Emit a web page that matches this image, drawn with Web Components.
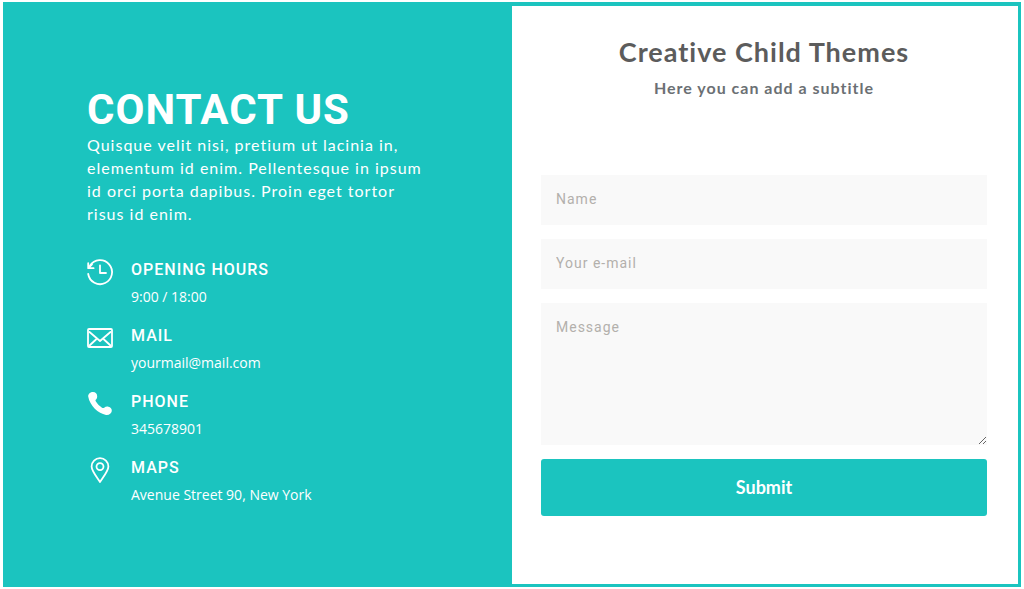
<!DOCTYPE html>
<html lang="en">
<head>
<meta charset="utf-8">
<meta name="viewport" content="width=device-width, initial-scale=1">
<title>Contact Us</title>
<style>
  :root { --teal: #1bc4bf; --heading: Roboto, "Liberation Sans", sans-serif; --body: Lato, "Noto Sans", sans-serif; --detail: "Open Sans", sans-serif; }
  body { margin: 0; background: #fff; font-family: var(--body); }
</style>
</head>
<body>
<contact-page>
  <contact-info slot="info" heading="CONTACT US">
    Quisque velit nisi, pretium ut lacinia in, elementum id enim. Pellentesque in ipsum id orci porta dapibus. Proin eget tortor risus id enim.
    <contact-item slot="items" icon="clock" label="OPENING HOURS">9:00 / 18:00</contact-item>
    <contact-item slot="items" icon="mail" label="MAIL">yourmail@mail.com</contact-item>
    <contact-item slot="items" icon="phone" label="PHONE">345678901</contact-item>
    <contact-item slot="items" icon="pin" label="MAPS">Avenue Street 90, New York</contact-item>
  </contact-info>
  <contact-form slot="form">
    <span slot="title">Creative Child Themes</span>
    <span slot="subtitle">Here you can add a subtitle</span>
  </contact-form>
</contact-page>
<script>
class BaseElement extends HTMLElement {
  connectedCallback() {
    if (!this.shadowRoot) this.attachShadow({ mode: "open" }).innerHTML = this.render();
  }
}

customElements.define("contact-page", class extends BaseElement {
  render() {
    return `<style>
      :host { display: block; box-sizing: border-box; padding: 2px 3px; }
      main { box-sizing: border-box; min-height: calc(100vh - 4px); display: grid; grid-template-columns: 1fr 1fr;
        background: var(--teal); border: solid var(--teal); border-width: 4px 3px 3px; }
    </style>
    <main><slot name="info"></slot><slot name="form"></slot></main>`;
  }
});

customElements.define("contact-info", class extends BaseElement {
  render() {
    return `<style>
      :host { display: block; color: #fff; padding: 80px 84px 40px 81px; }
      h1 { margin: 0; font: 700 42px/47px var(--heading); letter-spacing: 1px; white-space: nowrap; }
      p { margin: 0 0 33px; font-size: 16px; line-height: 23px; letter-spacing: 1px; }
      .items { display: grid; gap: 14px; }
    </style>
    <h1>${this.getAttribute("heading")}</h1>
    <p><slot></slot></p>
    <div class="items"><slot name="items"></slot></div>`;
  }
});

const icons = {
  clock: `<g fill="none" stroke="currentColor" stroke-width="1.8" stroke-linecap="round" stroke-linejoin="round">
    <path d="M1.2 15A12 12 0 1 0 3 6.6"/><path d="M1.2 4.2V9.2H6.6M1.6 8.8L5 5.4M13 6.5V14H19"/></g>`,
  mail: `<g fill="none" stroke="currentColor" stroke-width="1.8" stroke-linejoin="round" stroke-linecap="round">
    <rect x="1" y="4" width="24" height="18" rx="1"/><path d="M2.5 7L13 16L23.5 7M2.5 20.5L9 14.5M23.5 20.5L17 14.5"/></g>`,
  phone: `<path fill="currentColor" d="M1.2 5.6C1 2.8 3.4 1 6 1C8.6 1 10.2 3 10.2 5.2C10.2 7 9.5 8 8.7 8.8C8.3 9.3 8.5 9.9 8.9 10.5C10.5 13 12.5 15 15 16.7C15.9 17.3 16.5 17.2 17.2 16.7C18.3 15.8 19.8 15.3 21.4 15.7C23.6 16.2 25 18 24.8 20C24.5 22.6 22 24.3 19 23.9C11.3 22.9 2.8 14.8 1.2 5.6Z"/>`,
  pin: `<g fill="none" stroke="currentColor" stroke-width="1.8" stroke-linejoin="round">
    <path d="M13 25C10 20.5 4.6 14 4.6 9.6A8.4 8.4 0 0 1 21.4 9.6C21.4 14 16 20.5 13 25Z"/><circle cx="13" cy="9.6" r="3.5"/></g>`
};

customElements.define("contact-item", class extends BaseElement {
  render() {
    return `<style>
      :host { display: grid; grid-template-columns: 26px 1fr; gap: 18px; }
      svg { display: block; width: 26px; height: 26px; margin-top: 1px; overflow: visible; }
      h2 { margin: 0 0 2px; font: 500 16px/24px var(--heading); letter-spacing: 1px; }
      div div { font: 400 14px/26px var(--detail); }
    </style>
    <svg viewBox="0 0 26 26" aria-hidden="true">${icons[this.getAttribute("icon")]}</svg>
    <div><h2>${this.getAttribute("label")}</h2><div><slot></slot></div></div>`;
  }
});

customElements.define("contact-form", class extends BaseElement {
  render() {
    return `<style>
      :host { display: block; background: #fff; padding: 28px 31px 40px 29px; }
      header { text-align: center; margin-bottom: 73px; }
      h2 { margin: 0; font-size: 27px; line-height: 36px; font-weight: 700; letter-spacing: 1px; color: #5c5c5c; }
      p { margin: 4px 0 0; font-size: 16px; line-height: 28px; font-weight: 700; letter-spacing: 1px; color: #6b7074; }
      form { display: grid; gap: 14px; }
      input, textarea { box-sizing: border-box; display: block; width: 100%; height: 50px; margin: 0; padding: 0 15px 2px;
        border: 0; border-radius: 0; background: #f9f9f9; color: #666; font: 400 14px/20px var(--heading); letter-spacing: 1px; }
      textarea { height: 142px; padding-top: 14px; resize: vertical; }
      ::placeholder { color: #b3b0ac; opacity: 1; }
      button { height: 57px; padding: 0 16px 2px; border: 0; border-radius: 3px; background: var(--teal); color: #fff; font: 700 18px/24px var(--body); }
    </style>
    <header><h2><slot name="title"></slot></h2><p><slot name="subtitle"></slot></p></header>
    <form>
      <input id="name" type="text" placeholder="Name" aria-label="Name">
      <input id="email" type="email" placeholder="Your e-mail" aria-label="Your e-mail">
      <textarea id="message" placeholder="Message" aria-label="Message"></textarea>
      <button type="submit">Submit</button>
    </form>`;
  }
});
</script>
</body>
</html>
